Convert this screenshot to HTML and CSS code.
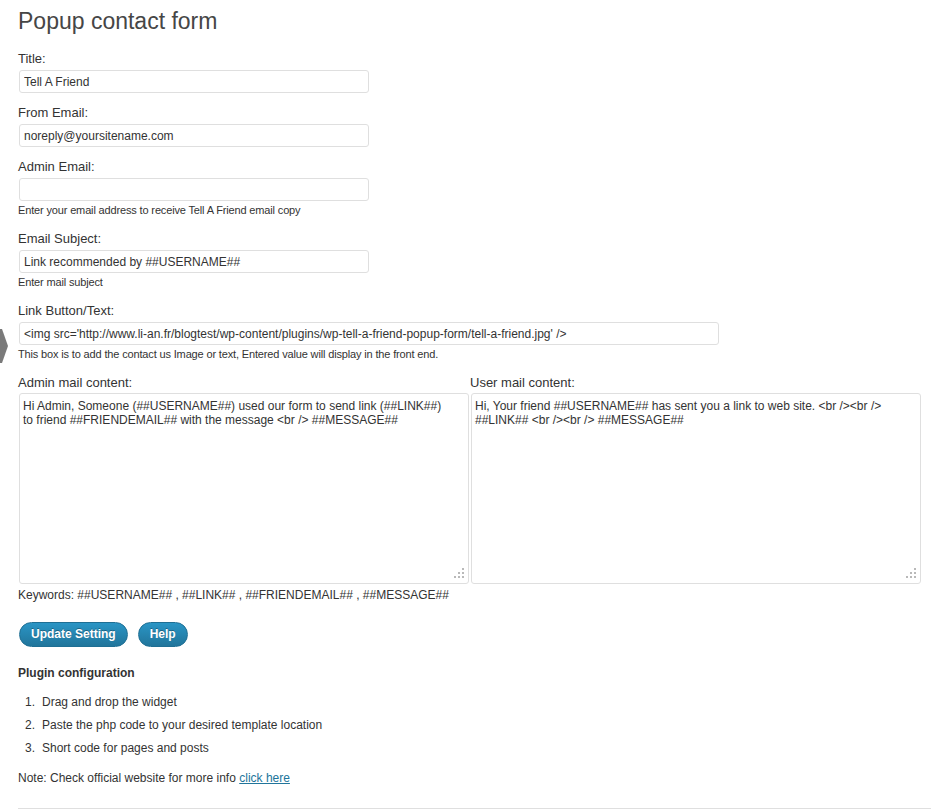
FILE: index.html
```html
<!DOCTYPE html>
<html lang="en">
<head>
<meta charset="utf-8">
<title>Popup contact form</title>
<link rel="stylesheet" href="styles.css">
</head>
<body>
<div class="menu-arrow">
  <svg width="8" height="34" viewBox="0 0 8 34"><polygon points="0,0 2,0 8,17 2,34 0,34" fill="#7a7a7a"/></svg>
</div>
<div class="wrap">
  <h2 class="page-title">Popup contact form</h2>
  <form class="settings-form">
    <div class="field">
      <label class="field-label">Title:</label>
      <input class="text-input" type="text" value="Tell A Friend">
    </div>
    <div class="field">
      <label class="field-label">From Email:</label>
      <input class="text-input" type="text" value="noreply@yoursitename.com">
    </div>
    <div class="field has-help">
      <label class="field-label">Admin Email:</label>
      <input class="text-input" type="text" value="">
      <p class="help">Enter your email address to receive Tell A Friend email copy</p>
    </div>
    <div class="field has-help">
      <label class="field-label">Email Subject:</label>
      <input class="text-input" type="text" value="Link recommended by ##USERNAME##">
      <p class="help">Enter mail subject</p>
    </div>
    <div class="field has-help">
      <label class="field-label">Link Button/Text:</label>
      <input class="text-input wide" type="text" value="&lt;img src='http://www.li-an.fr/blogtest/wp-content/plugins/wp-tell-a-friend-popup-form/tell-a-friend.jpg' /&gt;">
      <p class="help">This box is to add the contact us Image or text, Entered value will display in the front end.</p>
    </div>
    <div class="mail-row">
      <div class="mail-col">
        <label class="field-label mail-label">Admin mail content:</label>
        <div class="area-box">
          <textarea class="mail-area">Hi Admin, Someone (##USERNAME##) used our form to send link (##LINK##) to friend ##FRIENDEMAIL## with the message &lt;br /&gt; ##MESSAGE##</textarea>
          <svg class="grip" width="10" height="10" viewBox="0 0 10 10"><rect x="8" y="0" width="2" height="2"/><rect x="4" y="4" width="2" height="2"/><rect x="8" y="4" width="2" height="2"/><rect x="0" y="8" width="2" height="2"/><rect x="4" y="8" width="2" height="2"/><rect x="8" y="8" width="2" height="2"/></svg>
        </div>
      </div>
      <div class="mail-col">
        <label class="field-label mail-label">User mail content:</label>
        <div class="area-box">
          <textarea class="mail-area">Hi, Your friend ##USERNAME## has sent you a link to web site. &lt;br /&gt;&lt;br /&gt; ##LINK## &lt;br /&gt;&lt;br /&gt; ##MESSAGE##</textarea>
          <svg class="grip" width="10" height="10" viewBox="0 0 10 10"><rect x="8" y="0" width="2" height="2"/><rect x="4" y="4" width="2" height="2"/><rect x="8" y="4" width="2" height="2"/><rect x="0" y="8" width="2" height="2"/><rect x="4" y="8" width="2" height="2"/><rect x="8" y="8" width="2" height="2"/></svg>
        </div>
      </div>
    </div>
    <p class="keywords">Keywords: ##USERNAME## , ##LINK## , ##FRIENDEMAIL## , ##MESSAGE##</p>
    <div class="button-row">
      <button type="button" class="btn-primary">Update Setting</button>
      <button type="button" class="btn-primary">Help</button>
    </div>
  </form>
  <h3 class="config-title">Plugin configuration</h3>
  <ol class="config-list">
    <li>Drag and drop the widget</li>
    <li>Paste the php code to your desired template location</li>
    <li>Short code for pages and posts</li>
  </ol>
  <p class="note">Note: Check official website for more info <a class="note-link" href="#">click here</a></p>
</div>
<div class="bottom-rule"></div>
</body>
</html>
```

FILE: styles.css
```css
html, body {
  margin: 0;
  padding: 0;
  background: #fff;
}

body {
  font-family: "Liberation Sans", Arial, sans-serif;
  font-size: 12px;
  color: #333;
  position: relative;
}

.menu-arrow {
  position: absolute;
  left: 0;
  top: 329px;
  width: 8px;
  height: 34px;
  line-height: 0;
}

.wrap {
  margin: 0 9px 0 18px;
}

.page-title {
  margin: 0;
  padding: 7px 0 0;
  font-size: 23px;
  font-weight: normal;
  line-height: 29px;
  color: #464646;
}

.settings-form {
  margin: 15px 0 0;
  display: flex;
  flex-direction: column;
  align-items: stretch;
}

.field {
  display: flex;
  flex-direction: column;
  align-items: flex-start;
  margin-bottom: 11px;
}

.field.has-help {
  margin-bottom: 14px;
}

.field-label {
  display: block;
  font-size: 13px;
  line-height: 15px;
  margin-bottom: 3px;
  color: #333;
}

.text-input {
  display: block;
  box-sizing: border-box;
  width: 350px;
  height: 23px;
  margin: 1px;
  padding: 0 4px;
  border: 1px solid #dfdfdf;
  border-radius: 3px;
  background: #fff;
  font-family: "Liberation Sans", Arial, sans-serif;
  font-size: 12px;
  color: #333;
  outline: none;
}

.text-input.wide {
  width: 700px;
}

.help {
  margin: 2px 0 0;
  font-size: 11px;
  line-height: 13px;
  letter-spacing: -0.15px;
  color: #333;
}

.mail-row {
  display: grid;
  grid-template-columns: 452px 452px;
}

.mail-col {
  display: flex;
  flex-direction: column;
  align-items: flex-start;
}

.mail-label {
  margin-bottom: 2px;
}

.area-box {
  position: relative;
  width: 452px;
  display: flow-root;
}

.mail-area {
  display: block;
  box-sizing: border-box;
  width: 450px;
  height: 191px;
  margin: 1px;
  padding: 5px 20px 4px 3px;
  border: 1px solid #dfdfdf;
  border-radius: 3px;
  background: #fff;
  font-family: "Liberation Sans", Arial, sans-serif;
  font-size: 12px;
  line-height: 14px;
  color: #333;
  resize: none;
  overflow: hidden;
  outline: none;
}

.grip {
  position: absolute;
  right: 6px;
  bottom: 7px;
  fill: #b9b9b9;
}

.keywords {
  margin: 2px 0 0;
  line-height: 17px;
}

.button-row {
  display: flex;
  gap: 10px;
  margin-top: 18px;
  padding-left: 1px;
}

.btn-primary {
  box-sizing: border-box;
  height: 25px;
  padding: 0 11px;
  border: 1px solid #1f6f94;
  border-radius: 13px;
  background: linear-gradient(to bottom, #2a95c5 0%, #21759b 100%);
  color: #fff;
  font-family: "Liberation Sans", Arial, sans-serif;
  font-size: 12px;
  font-weight: bold;
  line-height: 23px;
  text-shadow: 0 -1px 0 rgba(0, 0, 0, 0.3);
  cursor: pointer;
}

.config-title {
  margin: 18px 0 0;
  font-size: 12px;
  font-weight: bold;
  line-height: 17px;
  color: #333;
}

.config-list {
  margin: 12px 0 0;
  padding: 0;
  list-style: none;
  counter-reset: step;
}

.config-list li {
  counter-increment: step;
  display: grid;
  grid-template-columns: 17px 1fr;
  column-gap: 7px;
  line-height: 17px;
  margin-bottom: 6px;
}

.config-list li:last-child {
  margin-bottom: 0;
}

.config-list li::before {
  content: counter(step) ".";
  text-align: right;
}

.note {
  margin: 13px 0 0;
  line-height: 17px;
}

.note-link {
  color: #21759b;
  text-decoration: underline;
}

.bottom-rule {
  margin: 21px 0 0 18px;
  border-top: 1px solid #dfdfdf;
  height: 0;
}
```
